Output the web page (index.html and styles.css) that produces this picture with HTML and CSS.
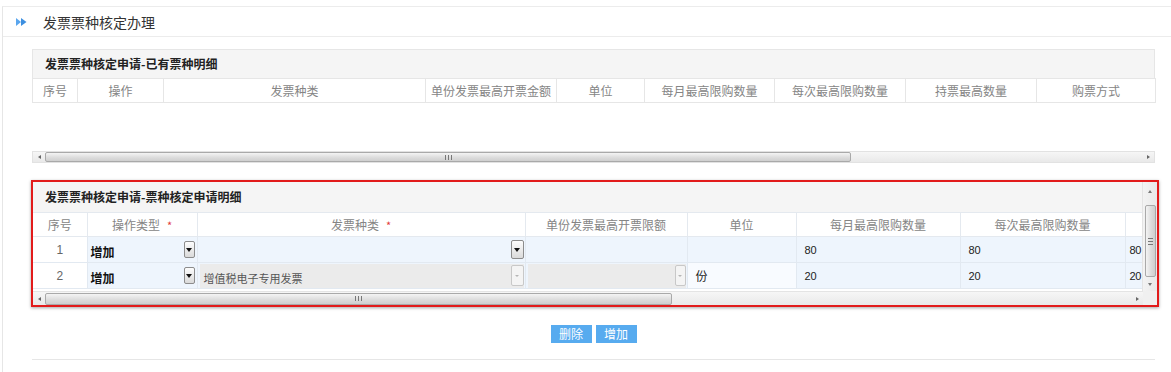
FILE: index.html
```html
<!DOCTYPE html>
<html lang="zh-CN">
<head>
    <meta charset="UTF-8">
    <title>发票票种核定办理</title>
    <link rel="stylesheet" href="styles.css">
</head>
<body>
<div class="page">
    <div class="title-bar">
        <svg viewBox="0 0 11 8"><polygon points="0,0 5,4 0,8" fill="#5aa6ee"/><polygon points="5,0 10.5,4 5,8" fill="#3d8fe0"/></svg>
        <h1>发票票种核定办理</h1>
    </div>

    <div class="content">
        <!-- existing ticket types -->
        <section class="panel">
            <div class="panel-head">发票票种核定申请-已有票种明细</div>
            <table class="grid">
                <colgroup>
                    <col style="width:45px"><col style="width:86px"><col style="width:262px"><col style="width:131px"><col style="width:88px"><col style="width:130px"><col style="width:131px"><col style="width:131px"><col style="width:119px">
                </colgroup>
                <thead>
                    <tr>
                        <th>序号</th><th>操作</th><th>发票种类</th><th>单份发票最高开票金额</th><th>单位</th><th>每月最高限购数量</th><th>每次最高限购数量</th><th>持票最高数量</th><th>购票方式</th>
                    </tr>
                </thead>
            </table>
            <div class="grid-empty"></div>
            <div class="hscroll">
                <span class="arr arr-left"></span>
                <div class="track"><div class="thumb thumb-wide"><span class="grip"></span></div></div>
                <span class="arr arr-right"></span>
            </div>
        </section>

        <!-- application detail -->
        <section class="box">
            <div class="box-main">
                <div class="box-body">
                    <div class="panel-head plain">发票票种核定申请-票种核定申请明细</div>
                    <table class="grid grid-edit">
                        <colgroup>
                            <col style="width:54px"><col style="width:110px"><col style="width:328px"><col style="width:162px"><col style="width:109px"><col style="width:164px"><col style="width:165px"><col style="width:18px">
                        </colgroup>
                        <thead>
                            <tr>
                                <th>序号</th>
                                <th>操作类型<span class="req">*</span></th>
                                <th>发票种类<span class="req">*</span></th>
                                <th>单份发票最高开票限额</th>
                                <th>单位</th>
                                <th>每月最高限购数量</th>
                                <th>每次最高限购数量</th>
                                <th></th>
                            </tr>
                        </thead>
                        <tbody>
                            <tr>
                                <td class="num">1</td>
                                <td class="pick"><div class="combo"><span class="val">增加</span><span class="dd"></span></div></td>
                                <td class="pick"><div class="combo wide"><span class="val"></span><span class="dd dd-big"></span></div></td>
                                <td></td>
                                <td></td>
                                <td>80</td>
                                <td>80</td>
                                <td class="cut">80</td>
                            </tr>
                            <tr>
                                <td class="num">2</td>
                                <td class="pick"><div class="combo"><span class="val">增加</span><span class="dd"></span></div></td>
                                <td class="pick"><div class="combo wide off"><span class="val">增值税电子专用发票</span><span class="dd dd-big"></span></div></td>
                                <td class="pick"><div class="combo wide off"><span class="val"></span><span class="dd dd-small"></span></div></td>
                                <td class="unit">份</td>
                                <td>20</td>
                                <td>20</td>
                                <td class="cut">20</td>
                            </tr>
                        </tbody>
                    </table>
                </div>
                <div class="vscroll">
                    <span class="arr arr-up"></span>
                    <div class="vthumb"><span class="vgrip"></span></div>
                    <span class="arr arr-down"></span>
                </div>
            </div>
            <div class="box-foot">
                <div class="hscroll">
                    <span class="arr arr-left"></span>
                    <div class="track"><div class="thumb thumb-short"><span class="grip"></span></div></div>
                    <span class="arr arr-right"></span>
                </div>
                <div class="corner"></div>
            </div>
        </section>

        <div class="actions">
            <button class="btn">删除</button>
            <button class="btn">增加</button>
        </div>
        <div class="foot-line"></div>
    </div>
</div>
</body>
</html>
```

FILE: styles.css
```css
body {
    margin: 0;
    font-family: "Noto Sans CJK SC", "Liberation Sans", sans-serif;
    font-size: 12px;
    color: #333;
    background: #fff;
}
.page {
    margin: 6px 0 0 2px;
    border-top: 1px solid #ececec;
    border-left: 1px solid #e6e6e6;
    height: 366px;
}
.title-bar {
    height: 29px;
    display: flex;
    align-items: center;
    padding-left: 13px;
    border-bottom: 1px solid #ececec;
}
.title-bar svg {
    width: 11px;
    height: 8px;
}
.title-bar h1 {
    margin: 0 0 0 16px;
    font-size: 14px;
    font-weight: normal;
    color: #333;
}
.content {
    padding: 12px 0 0 29px;
    width: 1123px;
}

/* panels */
.panel {
    width: 1123px;
}
.panel-head {
    height: 28px;
    line-height: 28px;
    padding-left: 12px;
    background: #f5f5f5;
    border: 1px solid #e6e6e6;
    border-bottom: none;
    font-weight: bold;
    color: #222;
}
.panel-head.plain {
    height: 30px;
    line-height: 30px;
    border: none;
}
.grid {
    border-collapse: collapse;
    table-layout: fixed;
    width: 1123px;
}
.grid th {
    height: 23px;
    padding: 0;
    font-weight: normal;
    color: #858585;
    border: 1px solid #e6e6e6;
    text-align: center;
    white-space: nowrap;
    overflow: hidden;
}
.grid-empty {
    height: 48px;
}
.req {
    color: #e23a3a;
    margin-left: 7px;
    font-size: 11px;
}

/* edit grid */
.box {
    width: 1128px;
    box-sizing: border-box;
    margin: 17px 0 0 -1px;
    border: 2px solid #e21b1b;
    box-shadow: 0 1px 3px rgba(0, 0, 0, 0.35);
}
.box-main {
    display: flex;
}
.box-body {
    width: 1110px;
    overflow: hidden;
}
.grid-edit {
    width: 1110px;
}
.grid-edit th {
    border-color: #e4e9ef;
}
.grid-edit th:first-child {
    border-left: none;
}
.grid-edit td {
    height: 25px;
    padding: 0 0 0 8px;
    background: #eef5fd;
    border: 1px solid #e2e9f1;
    font-family: "Liberation Sans", sans-serif;
    font-size: 11px;
    color: #222;
    white-space: nowrap;
    overflow: hidden;
}
.grid-edit td:first-child {
    border-left: none;
}
.grid-edit td.num {
    padding: 0;
    text-align: center;
    background: #fff;
    color: #666;
    font-size: 12px;
}
.grid-edit td.pick {
    padding: 0;
}
.grid-edit td.unit {
    background: #f8fbff;
    font-family: "Noto Sans CJK SC", sans-serif;
    font-size: 12px;
}
.grid-edit td.cut {
    padding-left: 4px;
    letter-spacing: -0.3px;
}
.combo {
    display: flex;
    align-items: center;
    justify-content: space-between;
    height: 25px;
    padding: 0 2px 0 3px;
}
.combo .val {
    padding-top: 4px;
    font-family: "Noto Sans CJK SC", sans-serif;
    font-size: 12px;
    font-weight: bold;
    color: #111;
}
.combo.wide {
    margin: 0 1px 0 2px;
    padding: 0 0 0 4px;
}
.combo.off {
    background: #ebebeb;
    height: 24px;
}
.combo.off .val {
    font-weight: normal;
    color: #555;
    font-size: 11px;
}
.dd {
    width: 11px;
    height: 17px;
    box-sizing: border-box;
    border: 1px solid #8c8c8c;
    border-radius: 2px;
    background: linear-gradient(#fdfdfd, #dadada);
    display: flex;
    align-items: center;
    justify-content: center;
}
.dd::after {
    content: "";
    border-left: 3px solid transparent;
    border-right: 3px solid transparent;
    border-top: 4px solid #111;
}
.dd-big {
    width: 13px;
    height: 19px;
}
.off .dd {
    border-color: #c8c8c8;
    background: #f4f4f4;
    height: 21px;
}
.off .dd::after {
    border-top-color: #b5b5b5;
    border-left-width: 2px;
    border-right-width: 2px;
    border-top-width: 2px;
}
.dd-small {
    width: 11px;
}

/* scrollbars */
.hscroll {
    display: flex;
    align-items: center;
    height: 12px;
    box-sizing: border-box;
    background: linear-gradient(#f6f6f6, #e9e9e9);
    border: 1px solid #e2e2e2;
}
.box-foot {
    display: flex;
}
.box-foot .hscroll {
    width: 1110px;
    height: 14px;
    border: none;
    border-top: 1px solid #e4e4e4;
}
.corner {
    width: 14px;
    background: #f0f0f0;
}
.track {
    flex: 1;
    display: flex;
    align-items: center;
}
.arr {
    width: 12px;
    display: flex;
    justify-content: center;
    align-items: center;
}
.arr::before {
    content: "";
    border: 2px solid transparent;
}
.arr-left::before {
    border-left: none;
    border-right: 3px solid #666;
}
.arr-right::before {
    border-right: none;
    border-left: 3px solid #666;
}
.arr-up,
.arr-down {
    width: 14px;
    height: 14px;
}
.arr-up::before {
    border-top: none;
    border-bottom: 3px solid #777;
}
.arr-down::before {
    border-bottom: none;
    border-top: 3px solid #777;
}
.thumb {
    height: 10px;
    box-sizing: border-box;
    border: 1px solid #a9a9a9;
    border-radius: 2px;
    background: linear-gradient(#f4f4f4, #dddddd 55%, #cfcfcf);
    display: flex;
    align-items: center;
    justify-content: center;
}
.thumb-wide {
    width: 806px;
}
.thumb-short {
    width: 627px;
    height: 12px;
}
.grip {
    width: 7px;
    height: 5px;
    background: repeating-linear-gradient(90deg, #777 0 1px, transparent 1px 3px);
}
.vscroll {
    width: 14px;
    background: linear-gradient(90deg, #f3f3f3, #e9e9e9);
    border-left: 1px solid #e4e4e4;
    display: flex;
    flex-direction: column;
    align-items: center;
    padding-top: 2px;
}
.vthumb {
    width: 11px;
    height: 72px;
    box-sizing: border-box;
    margin-top: 7px;
    border: 1px solid #a9a9a9;
    border-radius: 2px;
    background: linear-gradient(90deg, #f4f4f4, #dddddd 55%, #cfcfcf);
    display: flex;
    align-items: center;
    justify-content: center;
}
.vgrip {
    width: 5px;
    height: 7px;
    background: repeating-linear-gradient(#777 0 1px, transparent 1px 3px);
}

/* buttons */
.actions {
    display: flex;
    justify-content: center;
    gap: 4px;
    margin-top: 18px;
}
.btn {
    width: 41px;
    height: 18px;
    padding: 0;
    border: none;
    background: #57abef;
    color: #fff;
    font-family: "Noto Sans CJK SC", sans-serif;
    font-size: 12px;
    line-height: 18px;
}
.foot-line {
    margin-top: 16px;
    border-top: 1px solid #e6e6e6;
}
```
